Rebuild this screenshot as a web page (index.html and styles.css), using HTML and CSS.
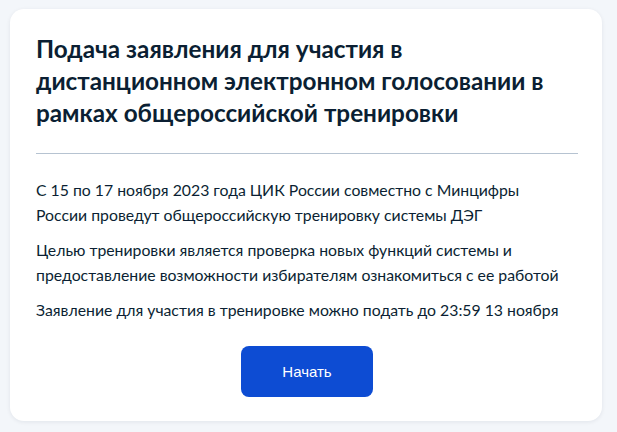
FILE: index.html
```html
<!DOCTYPE html>
<html lang="ru">
<head>
<meta charset="utf-8">
<title>Подача заявления</title>
<link rel="stylesheet" href="styles.css">
</head>
<body>
<main class="card">
  <h1 class="card__title">Подача заявления для участия в дистанционном электронном голосовании в рамках общероссийской тренировки</h1>
  <hr class="card__divider">
  <div class="card__body">
    <p>С 15 по 17 ноября 2023 года ЦИК России совместно с Минцифры России проведут общероссийскую тренировку системы ДЭГ</p>
    <p>Целью тренировки является проверка новых функций системы и предоставление возможности избирателям ознакомиться с ее работой</p>
    <p>Заявление для участия в тренировке можно подать до 23:59 13 ноября</p>
  </div>
  <div class="card__actions">
    <button class="btn" type="button">Начать</button>
  </div>
</main>
</body>
</html>
```
FILE: styles.css
```css
html, body {
  margin: 0;
  padding: 0;
}

body {
  background: #f3f6fa;
  font-family: Lato, "Noto Sans", sans-serif;
  color: #0b1f33;
  padding: 9px 15px 10px 10px;
}

.card {
  background: #ffffff;
  border-radius: 14px;
  box-shadow: 0 1px 4px rgba(11, 31, 51, 0.08);
  padding: 24px 24px 24px 26px;
}

.card__title {
  margin: 0;
  font-size: 24.3px;
  line-height: 32px;
  font-weight: 700;
  max-width: 520px;
}

.card__divider {
  border: 0;
  height: 1px;
  background: #b6c3d1;
  margin: 24px 0 24px;
}

.card__body {
  max-width: 528px;
}

.card__body p {
  margin: 0 0 11px;
  font-size: 15.8px;
  line-height: 24.5px;
}

.card__actions {
  display: flex;
  justify-content: center;
  padding-top: 12px;
}

.btn {
  width: 132px;
  height: 51px;
  border: 0;
  border-radius: 8px;
  background: #0d4cd3;
  color: #ffffff;
  font-family: "Liberation Sans", Arial, sans-serif;
  font-size: 15px;
}
```
